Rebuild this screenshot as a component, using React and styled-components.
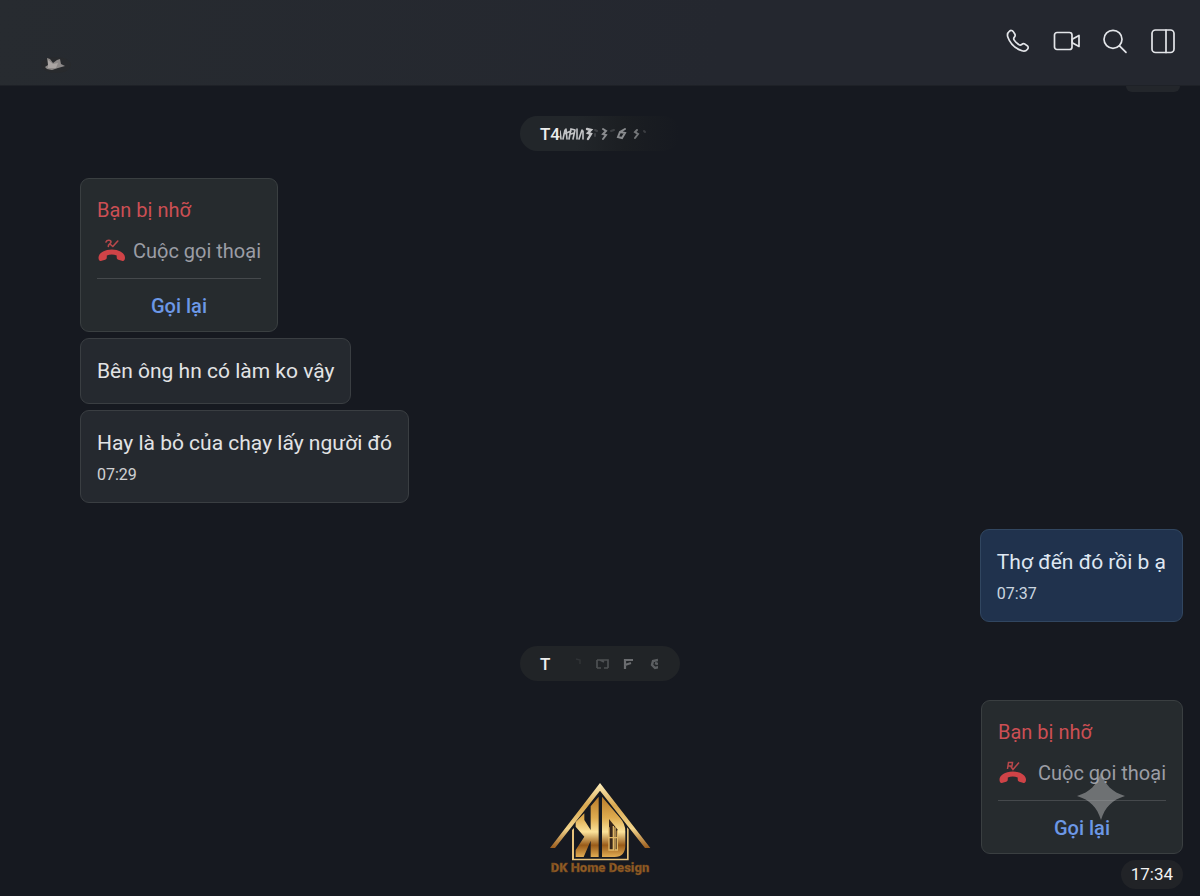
import React from 'react'
import styled, { createGlobalStyle } from 'styled-components'

const App = () => {
  return (
    <>
      <GlobalStyle />
      <Page>
        <Header>
          <ContactMark />
          <Actions>
            <IconButton aria-label="Gọi thoại"><PhoneIcon /></IconButton>
            <IconButton aria-label="Gọi video"><VideoIcon /></IconButton>
            <IconButton aria-label="Tìm kiếm"><SearchIcon /></IconButton>
            <IconButton aria-label="Thông tin hội thoại"><PanelIcon /></IconButton>
          </Actions>
        </Header>

        <Chat>
          <ClippedPill />
          <DayPill $faded>
            T4
            <DateSmudge />
          </DayPill>

          <Group>
            <MissedCall icon={<MissedHook />} />
            <Bubble>
              <Message>Bên ông hn có làm ko vậy</Message>
            </Bubble>
            <Bubble>
              <Message>Hay là bỏ của chạy lấy người đó</Message>
              <Time>07:29</Time>
            </Bubble>
          </Group>

          <Group $own>
            <Bubble $own>
              <Message>Thợ đến đó rồi b ạ</Message>
              <Time>07:37</Time>
            </Bubble>
          </Group>

          <DayPill>
            T
            <DaySmudge />
          </DayPill>

          <Group $own $tight>
            <MissedCall wide icon={<MissedFlag />} />
            <TimePill>17:34</TimePill>
          </Group>

          <Logo />
        </Chat>
      </Page>
    </>
  )
}

export default App

const MissedCall = ({ icon, wide }) => (
  <CallCard $wide={wide}>
    <CallTitle>Bạn bị nhỡ</CallTitle>
    <CallInfo>
      <CallIcon viewBox="0 0 28 24" fill="none" aria-hidden="true">
        <path
          d="M1.500 18.500C1.500 14.500 7 10.500 14.800 10.500S28 14.500 28 18.500C28 21.500 26.800 22.300 24.800 21.700L21.300 20.700C20 20.300 19.700 19.500 19.700 18V16.400C16.500 15.300 13 15.300 9.800 16.400V18C9.800 19.500 9.500 20.300 8.200 20.700L4.600 21.700C2.600 22.300 1.500 21.500 1.500 18.500Z"
          fill="#cf4347"
        />
        {icon}
      </CallIcon>
      Cuộc gọi thoại
    </CallInfo>
    <CallBack>Gọi lại</CallBack>
    {wide && <Sparkle />}
  </CallCard>
)

const MissedHook = () => (
  <path d="M9 3C10 0.500 14 0.800 14 3C13.800 5 11 5 11.300 7.500M13.500 5.500L15.800 7.500L20.800 2" stroke="#b8484b" strokeWidth="1.600" strokeLinecap="round" strokeLinejoin="round" />
)

const MissedFlag = () => (
  <path d="M9.500 8L10.500 1.500H14.500L14 5H10M12.500 5L15 8.500L21 1.500" stroke="#b8484b" strokeWidth="1.500" />
)

const line = {
  fill: 'none',
  stroke: '#e3e5e9',
  strokeWidth: 1.7,
  strokeLinecap: 'round',
  strokeLinejoin: 'round',
  'aria-hidden': true,
}

const PhoneIcon = () => (
  <svg width="28" height="28" viewBox="0 0 28 28" {...line}>
    <path d="M4.500 4.200C5.600 3.200 7.200 3.200 8.100 4.400L9.800 7C10.500 8.200 10.200 9.200 9.400 10.100C8.400 11.200 8.400 11.900 9.200 13.100C10.400 14.900 12 16.500 13.800 17.600C15 18.400 15.700 18.300 16.700 17.500C17.600 16.700 18.700 16.400 19.900 17.100L22.200 18.700C23.500 19.700 23.500 21.200 22.500 22.300C21.100 24 19.200 24.600 17 23.800C10.200 21.500 5.200 16.800 2.900 10.300C2 7.900 2.500 5.800 4.500 4.200Z" />
  </svg>
)

const VideoIcon = () => (
  <svg width="28" height="28" viewBox="0 0 28 28" {...line}>
    <rect x="1.500" y="5.500" width="17.500" height="17" rx="2.500" />
    <path d="M19.200 12.300L26 8.500V19.500L19.200 15.700Z" />
  </svg>
)

const SearchIcon = () => (
  <svg width="28" height="28" viewBox="0 0 28 28" {...line}>
    <circle cx="12" cy="12.300" r="9" />
    <path d="M18.500 18.800L25 25.300" />
  </svg>
)

const PanelIcon = () => (
  <svg width="28" height="28" viewBox="0 0 28 28" {...line}>
    <rect x="3" y="3" width="22" height="22.500" rx="3.500" />
    <path d="M17 3V25.500" />
  </svg>
)

const ContactMark = () => (
  <svg width="32" height="20" viewBox="0 0 32 20" aria-hidden="true">
    <ellipse cx="16" cy="10" rx="15" ry="8" fill="#282a2d" />
    <path d="M7 3L10 4L13 8L17 5L20 4L21 9L25 11L18 13L12 15L7 14L5 12L8 10Z" fill="#8d8988" />
    <path d="M8 5L13 9L18 8L16 13L8 13Z" fill="#aaa5a3" />
  </svg>
)

const DateSmudge = () => (
  <svg width="106" height="16" viewBox="0 0 106 16" fill="none" strokeLinecap="round" aria-hidden="true">
    <g stroke="#c4c5c7" strokeWidth="1.600">
      <path d="M0 5L1 13M3 13L5 4M6 3L7 13M4 8L11 5M9 13L11 3L15 4M11 8L14 7M13 13L15 4M17 3V13M19 13L22 4M23 5V13" />
      <path d="M27 3L31 4L28 7L31 8L28 13" strokeWidth="2.400" />
    </g>
    <g stroke="#8a8c8f" strokeWidth="2">
      <path d="M35 4L37 5M35 8V10" opacity=".3" />
      <path d="M43 3L46 5L43 8L46 9L43 13" />
      <path d="M51 5L54 4" opacity=".3" />
      <path d="M65 3L60 6L58 11L62 12L65 7L60 6" />
      <path d="M77 4L75 6L78 8L75 12" opacity=".8" />
      <path d="M84 5L85 6" opacity=".3" />
    </g>
  </svg>
)

const DaySmudge = () => (
  <svg width="108" height="16" viewBox="0 0 108 16" fill="none" aria-hidden="true">
    <path d="M26 3L30 4V8" stroke="#303336" strokeWidth="1.500" />
    <path d="M47 4V12M47 4H58V12M47 12H51M54 12H58M50 4L54 6" stroke="#4d5053" strokeWidth="1.700" />
    <path d="M75 13V4H83M75 9L81 7" stroke="#6b6d70" strokeWidth="2.200" />
    <path d="M108 4L103 5L102 9L105 12L109 11M105 7L108 8" stroke="#5c5f62" strokeWidth="2.400" />
  </svg>
)

const Logo = () => (
  <LogoSvg viewBox="0 0 390 345" role="img" aria-label="DK Home Design">
    <defs>
      <linearGradient id="roof" x1="0" y1="0" x2="0" y2="1">
        <stop offset="0" stopColor="#fff0bd" />
        <stop offset=".35" stopColor="#d9a850" />
        <stop offset=".7" stopColor="#f3d58c" />
        <stop offset="1" stopColor="#9a5c1d" />
      </linearGradient>
      <linearGradient id="gold" gradientUnits="userSpaceOnUse" x1="0" y1="80" x2="0" y2="262">
        <stop offset="0" stopColor="#b97b29" />
        <stop offset=".35" stopColor="#dfac50" />
        <stop offset=".58" stopColor="#fbe29a" />
        <stop offset=".8" stopColor="#995b19" />
        <stop offset="1" stopColor="#e4af55" />
      </linearGradient>
    </defs>
    <path d="M195 39L346 234H330L195 62L60 234H45Z" fill="url(#roof)" />
    <path d="M111 180V271H281V178L276 172V266H117V174Z" fill="#e8c37b" />
    <path d="M191 80L167 109V180L148 150V130L122 156V170L148 200L122 240V261H146L167 212V261H191Z" fill="url(#gold)" />
    <path d="M201 80L222 105L256 145Q271 162 271 184V225Q271 261 239 261H201Z" fill="url(#gold)" />
    <path d="M222 147L247 178V240H222Z" fill="#38261a" />
    <path d="M222 172V240H235V168M240 172V240H247V182M222 203H247" fill="none" stroke="#e2b867" strokeWidth="4" />
    <text x="195" y="307" textAnchor="middle" fontFamily="'Roboto', sans-serif" fontWeight="900" fontSize="39" fill="#925d25" stroke="#6b431d" strokeWidth="1">
      DK Home Design
    </text>
  </LogoSvg>
)

const Sparkle = () => (
  <SparkleSvg viewBox="0 0 48 48" aria-hidden="true">
    <path d="M24 0C28 13 35 20 48 24C35 28 28 35 24 48C20 35 13 28 0 24C13 20 20 13 24 0Z" fill="#a9abad" fillOpacity=".55" />
  </SparkleSvg>
)

const GlobalStyle = createGlobalStyle`
  * {
    box-sizing: border-box;
  }
  body {
    margin: 0;
    background: #161920;
    font-family: 'Roboto', 'Inter', sans-serif;
  }
  button {
    padding: 0;
    border: none;
    background: none;
    font-family: inherit;
    cursor: pointer;
  }
  svg {
    display: block;
    flex-shrink: 0;
  }
`

const Page = styled.div`
  min-height: 100vh;
  display: flex;
  flex-direction: column;
`

const Header = styled.header`
  height: 86px;
  padding: 0 23px 0 40px;
  display: flex;
  justify-content: space-between;
  align-items: center;
  background: linear-gradient(100deg, #272b30, #24272f 60%);
  border-bottom: 1px solid #1e2127;

  > svg {
    align-self: flex-end;
    margin-bottom: 10px;
  }
`

const Actions = styled.div`
  display: flex;
  gap: 20px;
  padding-bottom: 4px;
`

const IconButton = styled.button`
  width: 28px;
  height: 28px;
`

const Chat = styled.main`
  position: relative;
  flex: 1;
  display: flex;
  flex-direction: column;
  padding: 30px 17px 5px 80px;
`

const ClippedPill = styled.div`
  position: absolute;
  top: 0;
  right: 20px;
  width: 54px;
  height: 6px;
  border-radius: 0 0 14px 14px;
  background: #23262b;
`

const DayPill = styled.div`
  align-self: center;
  display: flex;
  align-items: center;
  width: 160px;
  height: 35px;
  margin-right: 63px;
  padding-left: 20px;
  border-radius: 18px;
  color: #eceded;
  font-size: 17px;
  font-weight: 500;
  line-height: 24px;
  background: ${({ $faded }) =>
    $faded ? 'linear-gradient(90deg, #22262a 35%, #1b1e22 65%, #161920)' : '#212427'};
`

const Group = styled.section`
  display: flex;
  flex-direction: column;
  align-items: ${({ $own }) => ($own ? 'flex-end' : 'flex-start')};
  gap: 6px;
  margin: ${({ $own, $tight }) => ($tight ? '19px 0 0' : $own ? '0 0 24px' : '27px 0 26px')};
`

const Bubble = styled.div`
  padding: 16px;
  border: 1px solid ${({ $own }) => ($own ? '#314660' : '#3a3e42')};
  border-radius: 9px;
  background: ${({ $own }) => ($own ? '#20324d' : '#25292f')};
  color: ${({ $own }) => ($own ? '#dfe7f2' : '#e2e3e5')};
`

const Message = styled.p`
  margin: 0;
  font-size: 21px;
  line-height: 32px;
`

const Time = styled.time`
  display: block;
  margin-top: 5px;
  font-size: 16px;
  line-height: 22px;
  opacity: .9;
`

const CallCard = styled.div`
  position: relative;
  display: flex;
  flex-direction: column;
  width: ${({ $wide }) => ($wide ? '202px' : '198px')};
  padding: 15px 16px 8px;
  border: 1px solid #3a3f41;
  border-radius: 9px;
  background: #262b2e;
`

const CallTitle = styled.div`
  color: #cc4f54;
  font-size: 20px;
  line-height: 32px;
`

const CallInfo = styled.div`
  display: flex;
  justify-content: space-between;
  align-items: center;
  height: 53px;
  padding-bottom: 2px;
  border-bottom: 1px solid #45494c;
  color: #9b9da5;
  font-size: 20px;
  white-space: nowrap;
`

const CallIcon = styled.svg`
  width: 28px;
  height: 24px;
`

const CallBack = styled.button`
  height: 44px;
  padding-top: 10px;
  color: #6c98e6;
  font-size: 20px;
  font-weight: 500;
  line-height: 32px;
`

const TimePill = styled.time`
  padding: 0 10px;
  border-radius: 15px;
  background: #212327;
  color: #f2f2f3;
  font-size: 17px;
  line-height: 29px;
`

const SparkleSvg = styled.svg`
  position: absolute;
  right: 57px;
  top: 71px;
  width: 48px;
  height: 48px;
`

const LogoSvg = styled.svg`
  position: absolute;
  left: 50%;
  bottom: 11px;
  width: 130px;
  height: 115px;
  transform: translateX(-50%);
`
